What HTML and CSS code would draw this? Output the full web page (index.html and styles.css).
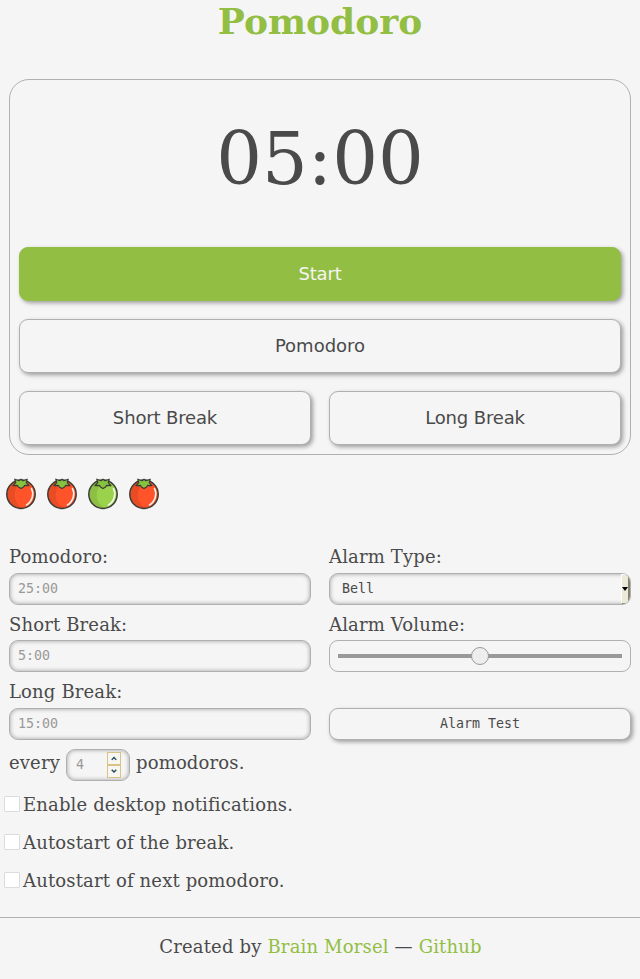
FILE: index.html
```html
<!DOCTYPE html>
<html lang="en">
<head>
<meta charset="utf-8">
<title>Pomodoro</title>
<link rel="stylesheet" href="styles.css">
</head>
<body>
<svg class="symbols" aria-hidden="true">
  <symbol id="tomato" viewBox="0 0 32 33">
    <circle cx="16" cy="17.3" r="14.2" fill="currentColor"/>
    <path class="shade" d="M16 3.1a14.2 14.2 0 0 0 0 28.4c1 0 2-.1 3-.3C9.500 28 8 17 11.500 11 13 8 15 5 16 3.100z"/>
    <path d="M26.500 11.500C29.300 17 27.300 24.500 21.500 28" fill="none" stroke="#fff" stroke-opacity=".9" stroke-width="1.600" stroke-linecap="round"/>
    <circle cx="16" cy="17.300" r="14.200" fill="none" stroke="#3c3c36" stroke-width="1.500"/>
    <path d="M9.800 2.200L14 3.800 16 2.200 18 3.800 22.200 2.200 21.200 5.600 24 8.600 19.600 8.300 18.600 10 16 11.600 13.400 10 12.400 8.300 8 8.600 10.800 5.600z" fill="#86c440" stroke="#3c3c36" stroke-width="1.200" stroke-linejoin="round"/>
  </symbol>
</svg>
<h1 class="title">Pomodoro</h1>
<main>
  <section class="timer">
    <div class="clock">05:00</div>
    <button class="btn primary">Start</button>
    <button class="btn">Pomodoro</button>
    <div class="pair">
      <button class="btn tight">Short Break</button>
      <button class="btn tight">Long Break</button>
    </div>
  </section>
  <div class="tomatoes">
    <svg class="tomato"><use href="#tomato"/></svg>
    <svg class="tomato"><use href="#tomato"/></svg>
    <svg class="tomato green"><use href="#tomato"/></svg>
    <svg class="tomato"><use href="#tomato"/></svg>
  </div>
  <section class="settings">
    <div class="column">
      <div class="field"><label for="pomodoro">Pomodoro:</label><input id="pomodoro" class="control inset" placeholder="25:00"></div>
      <div class="field middle"><label for="short">Short Break:</label><input id="short" class="control inset" placeholder="5:00"></div>
      <div class="field"><label for="long">Long Break:</label><input id="long" class="control inset" placeholder="15:00"></div>
    </div>
    <div class="column">
      <div class="field"><span class="label">Alarm Type:</span>
        <div class="control inset select"><span>Bell</span><span class="drop"><svg viewBox="0 0 6 4"><path d="M0 0h6L3 4z"/></svg></span></div>
      </div>
      <div class="field middle"><span class="label">Alarm Volume:</span>
        <div class="control slider"><span class="track"></span><span class="thumb"></span></div>
      </div>
      <div class="field"><span class="label">&nbsp;</span><button class="control test">Alarm Test</button></div>
    </div>
  </section>
  <div class="every">
    <span class="word">every</span>
    <div class="control inset number"><span>4</span>
      <span class="spin">
        <svg viewBox="0 0 12 12"><path d="M3.500 7.500L6 5l2.500 2.500"/></svg>
        <svg viewBox="0 0 12 12"><path d="M3.500 4L6 6.500 8.500 4"/></svg>
      </span>
    </div>
    <span class="word">pomodoros.</span>
  </div>
  <div class="checks">
    <label class="check"><input type="checkbox">Enable desktop notifications.</label>
    <label class="check"><input type="checkbox">Autostart of the break.</label>
    <label class="check"><input type="checkbox">Autostart of next pomodoro.</label>
  </div>
</main>
<footer>Created by <a>Brain Morsel</a> — <a>Github</a></footer>
</body>
</html>
```
FILE: styles.css
```css
* { box-sizing: border-box; }
body {
  margin: 0;
  height: 979px;
  overflow: hidden;
  background: #f5f5f5;
  color: #4a4a4a;
  font: 18px/26px "DejaVu Serif", serif;
  letter-spacing: .150px;
}
.symbols { display: none; }
.title {
  margin: 0;
  height: 79px;
  color: #92be43;
  font-size: 36px;
  line-height: 42px;
  letter-spacing: 0;
  text-align: center;
}
.timer {
  height: 376px;
  margin: 0 9px;
  padding: 0 9px;
  border: 1px solid #b0b0b0;
  border-radius: 20px;
}
.clock {
  height: 167px;
  padding-top: 26px;
  font-size: 72px;
  line-height: 106px;
  letter-spacing: 0;
  text-align: center;
}
.btn {
  display: block;
  width: 100%;
  height: 54px;
  margin: 0 0 18px;
  padding: 0;
  border: 1px solid #b0b0b0;
  border-radius: 9px;
  background: #f5f5f5;
  box-shadow: 2px 2px 4px rgba(0, 0, 0, .36);
  color: #4a4a4a;
  font: 18px/26px "DejaVu Sans", sans-serif;
}
.primary { border-color: #92be43; background: #92be43; color: #f5f5f5; letter-spacing: -.150px; }
.tight { letter-spacing: -.150px; }
.pair { display: grid; grid-template-columns: 1fr 1fr; gap: 18px; }
.tomatoes { display: flex; gap: 9px; padding: 22px 5px 0; height: 88px; }
.tomato { width: 32px; height: 33px; color: #ff5429; }
.shade { fill: #000; fill-opacity: .09; }
.green { color: #9bd24b; }
.settings { display: grid; grid-template-columns: 302px 302px; gap: 18px; padding: 0 9px; }
.field { height: 67px; }
.field label, .label { display: block; height: 30px; line-height: 28px; }
.middle { height: 68px; }
.field.middle label, .middle .label { line-height: 30px; }
.control {
  display: block;
  width: 302px;
  height: 32px;
  margin: 0;
  padding: 0 8px;
  border: 1px solid #b0b0b0;
  border-radius: 9px;
  background: #f5f5f5;
  color: #4a4a4a;
  font: 13.300px/28px "DejaVu Sans Mono", monospace;
  letter-spacing: 0;
}
input.control { padding-bottom: 2px; }
.inset { box-shadow: inset 0 0 4px rgba(0, 0, 0, .36); }
.control::placeholder { color: #999; opacity: 1; }
.select { display: flex; justify-content: space-between; overflow: hidden; padding: 0 0 0 12px; line-height: 30px; }
.drop {
  display: flex;
  flex: none;
  align-items: center;
  width: 9px;
  border: solid #fff;
  border-width: 1px 0 0 1px;
  border-right: 2px solid #85816e;
  border-bottom: 1px solid #85816e;
  background: #ece9d8;
}
.drop svg { flex: none; width: 6px; height: 4px; }
.slider { display: grid; align-items: center; }
.track, .thumb { grid-area: 1 / 1; }
.track { height: 4px; background: #999; }
.thumb {
  justify-self: center;
  width: 18px;
  height: 18px;
  border: 1px solid #999;
  border-radius: 50%;
  background: #eee;
}
.test { box-shadow: 2px 2px 4px rgba(0, 0, 0, .36); text-align: center; }
.every { display: flex; gap: 6px; height: 41px; padding: 4px 9px 0; }
.word { padding-top: 1px; }
.number {
  display: flex;
  justify-content: space-between;
  width: 64px;
  padding: 1px 8px 0 9px;
  color: #999;
}
.spin { display: flex; flex-direction: column; width: 14px; padding-top: 1px; }
.spin svg {
  width: 14px;
  height: 13px;
  border: 1px solid #d8c384;
  background: #f7f6f0;
  fill: none;
  stroke: #21475a;
  stroke-width: 1.500;
}
.check { display: flex; align-items: center; height: 38px; padding-left: 4px; }
.check input {
  appearance: none;
  width: 16px;
  height: 16px;
  margin: 0 3px 2px 0;
  border: 1px solid #dcdcdc;
  border-radius: 1px;
  background: #fff;
}
footer { margin-top: 17px; padding: 16px 0 0 1px; border-top: 1px solid #b0b0b0; letter-spacing: .170px; text-align: center; }
a { color: #92be43; }
```
